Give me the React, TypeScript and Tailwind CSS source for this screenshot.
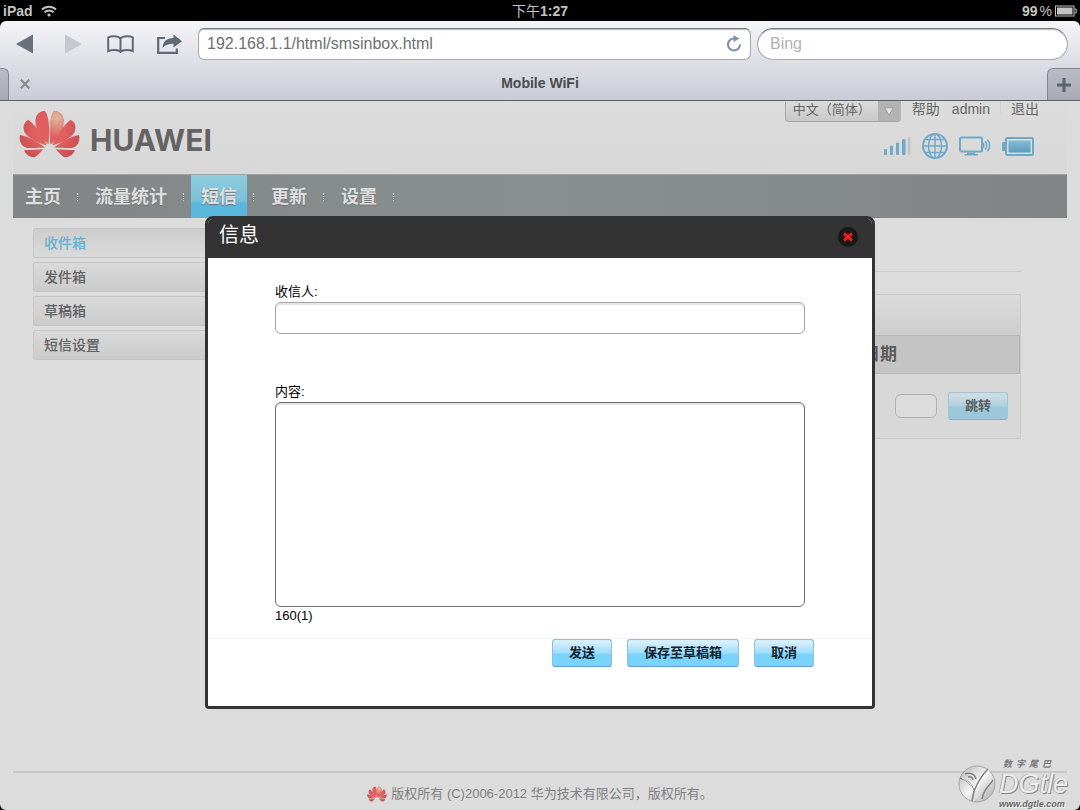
import { useState, FormEvent, ReactNode } from "react";

const navItems = ["主页", "流量统计", "短信", "更新", "设置"];
const folders = ["收件箱", "发件箱", "草稿箱", "短信设置"];

const fontSans = "font-['Liberation_Sans','Noto_Sans_CJK_SC',sans-serif]";

function HuaweiFlower({ className }: { className: string }) {
  const half = (
    <>
      <path d="M147 149C151 110 150 64 136 48C114 50 103 68 109 92C115 114 130 134 147 149Z" />
      <path d="M141 153C132 122 108 92 86 75C70 84 67 104 79 119C93 136 120 146 141 153Z" />
      <path d="M136 159C114 140 86 126 61 121C57 138 64 156 82 160C98 161 120 160 136 159Z" />
      <path d="M131 164L73 167C80 183 98 191 107 187C116 181 123 173 131 164Z" />
    </>
  );
  return (
    <svg viewBox="58 46 184 144" className={className} aria-hidden="true">
      <defs>
        <radialGradient id="petal" gradientUnits="userSpaceOnUse" cx="150" cy="110" r="95">
          <stop offset="0.5" stopColor="#e06060" />
          <stop offset="1" stopColor="#c95052" />
        </radialGradient>
        <radialGradient id="petalLight" gradientUnits="userSpaceOnUse" cx="172" cy="68" r="60">
          <stop offset="0" stopColor="#dfb89c" />
          <stop offset="1" stopColor="#e06060" />
        </radialGradient>
      </defs>
      <g fill="url(#petal)">{half}</g>
      <g fill="url(#petal)" transform="translate(300 0) scale(-1 1)">
        {half}
      </g>
      <path
        fill="url(#petalLight)"
        d="M153 149C149 110 150 64 164 48C186 50 197 68 191 92C185 114 170 134 153 149Z"
      />
    </svg>
  );
}

function StatusBar() {
  return (
    <div className="grid h-[21px] grid-cols-3 items-center bg-black px-[3px] text-sm font-bold text-[#c4c4c4]">
      <div className="flex items-center gap-2">
        <span>iPad</span>
        <svg viewBox="0 0 16 12" className="h-3 w-4" fill="none" stroke="currentColor" strokeWidth="2">
          <path d="M1 4.5a10 10 0 0 1 14 0M3.5 7.3a6.4 6.4 0 0 1 9 0" />
          <circle cx="8" cy="10" r="1.6" fill="currentColor" stroke="none" />
        </svg>
      </div>
      <div className="text-center">
        <span className="font-normal">下午</span>1:27
      </div>
      <div className="flex items-center justify-end gap-[3px]">
        <span>
          99<span className="pl-0.5 font-normal">%</span>
        </span>
        <svg viewBox="0 0 22 12" className="h-3 w-[22px]" fill="none" stroke="currentColor">
          <rect x="0.5" y="1" width="18.5" height="10" />
          <rect x="2" y="2.5" width="15.5" height="7" fill="currentColor" stroke="none" />
          <path d="M19.5 4h1.7v4h-1.7" />
        </svg>
      </div>
    </div>
  );
}

function BrowserBar() {
  return (
    <div className="rounded-t-md border-b border-[#5d5f63] bg-linear-to-b from-[#f5f5f8] via-[#dfe0e6] to-[#c9ccd7]">
      <div className="flex h-[47px] items-center pr-3 pb-0.5 pl-4">
        <div className="flex w-[182px] shrink-0 items-center">
          <button aria-label="后退" className="w-[49px]">
            <svg viewBox="0 0 17 20" className="h-5 w-[17px]">
              <path d="M0 10L17 0.5v19z" fill="#68707a" />
            </svg>
          </button>
          <button aria-label="前进" className="w-[42px]">
            <svg viewBox="0 0 17 20" className="h-5 w-[17px]">
              <path d="M17 10L0 0.5v19z" fill="#c6c8cd" />
            </svg>
          </button>
          <button aria-label="书签" className="w-[50px]">
            <svg viewBox="0 0 27 18" className="h-[18px] w-[27px]" fill="none" stroke="#5f6973" strokeWidth="2">
              <path d="M13.5 3.5C11 .8 5 .6 1.2 2.4v13.8C5 14.4 11 14.4 13.5 16.8C16 14.4 22 14.4 25.8 16.2V2.4C22 .6 16 .8 13.5 3.5V16.5" />
            </svg>
          </button>
          <button aria-label="分享">
            <svg viewBox="0 0 25 20" className="h-5 w-[25px]">
              <path d="M8 4H1.2v14.8h18.6v-4.3" fill="none" stroke="#5f6973" strokeWidth="2.2" />
              <path d="M5.5 14C6 7.5 9.5 4 16.5 4V0.5L25 7.2L16.5 13.5V9.8C12 9.6 8.5 10.5 5.5 14Z" fill="#5f6973" />
            </svg>
          </button>
        </div>
        <form className="grid flex-1 grid-cols-[16fr_9fr] gap-1.5" onSubmit={(e) => e.preventDefault()}>
          <div className="flex h-8 min-w-0 items-center rounded-md border border-[#a9abb0] border-t-[#77797d] bg-white px-2 shadow-[inset_0_1px_1px_#b5b6b9]">
            <input
              aria-label="地址"
              defaultValue="192.168.1.1/html/smsinbox.html"
              className="min-w-0 flex-1 text-base text-[#6f6f6f] outline-none"
            />
            <button type="button" aria-label="重新载入">
              <svg viewBox="0 0 16 17" className="h-[17px] w-4">
                <path d="M14 9.5A6 6 0 1 1 8 3.5" fill="none" stroke="#7f93ad" strokeWidth="2.2" />
                <path d="M7.5 0.3L13.5 3.6L7.5 7z" fill="#7f93ad" />
              </svg>
            </button>
          </div>
          <div className="flex h-8 min-w-0 items-center rounded-full border border-[#a9abb0] border-t-[#77797d] bg-white px-3 shadow-[inset_0_1px_1px_#b5b6b9]">
            <input
              aria-label="搜索"
              placeholder="Bing"
              className="min-w-0 flex-1 text-base outline-none placeholder:text-[#b3b3b3]"
            />
          </div>
        </form>
      </div>
      <div className="flex h-8 items-stretch">
        <div className="w-[9px] rounded-tr-md border-t border-r border-[#85878e] bg-linear-to-b from-[#b9bbc5] to-[#a7a9b5]" />
        <div className="flex w-6 items-center justify-end">
          <button aria-label="关闭标签页" className="px-[3px]">
            <svg viewBox="0 0 10 10" className="size-2.5" stroke="#85878c" strokeWidth="2">
              <path d="M0.8 0.8l8.4 8.4M9.2 0.8L0.8 9.2" />
            </svg>
          </button>
        </div>
        <div className="flex flex-1 items-center justify-center pb-0.5 text-sm font-bold text-[#484b50]">Mobile WiFi</div>
        <button
          aria-label="新标签页"
          className="flex w-[33px] items-center justify-center rounded-tl-md border-t border-l border-[#85878e] bg-linear-to-b from-[#b9bbc5] to-[#a7a9b5]"
        >
          <svg viewBox="0 0 14 14" className="size-3.5" stroke="#5b626c" strokeWidth="3">
            <path d="M7 0v14M0 7h14" />
          </svg>
        </button>
      </div>
    </div>
  );
}

function DeviceIcons() {
  return (
    <div className="mt-3 mr-[5px] flex items-center gap-[11px]">
      <svg viewBox="0 0 27 20" className="h-5 w-[27px]" fill="#6ea9c8">
        <rect x="0" y="13" width="3" height="6" rx="1" />
        <rect x="6" y="9.5" width="3" height="9.5" rx="1" />
        <rect x="12" y="6.5" width="3" height="12.5" rx="1" />
        <rect x="18" y="3" width="3.5" height="16" rx="1" />
        <rect x="24" y="1" width="2.5" height="18" rx="1" fill="#c3c3c3" />
      </svg>
      <svg viewBox="0 0 26 26" className="size-[26px]" fill="none" stroke="#6fabc9" strokeWidth="1.5">
        <circle cx="13" cy="13" r="12" strokeWidth="2" />
        <ellipse cx="13" cy="13" rx="6.5" ry="12" />
        <path d="M13 1v24M1 13h24M3.5 6.5h19M3.5 19.5h19" />
      </svg>
      <svg viewBox="0 0 32 20" className="h-5 w-8" fill="none" stroke="#6fabc9">
        <rect x="1" y="1.5" width="22" height="14" rx="1" strokeWidth="2" />
        <path d="M8 16.5h8v1.5h3v1.5H5.5V18H8z" fill="#6fabc9" stroke="none" />
        <path d="M24 7q1.5 2.5 0 5M26.2 5.2q3 4.3 0 8.6M28.5 3.5q4.2 6 0 12" strokeWidth="1.5" />
      </svg>
      <svg viewBox="0 0 32 19" className="h-[19px] w-8">
        <defs>
          <linearGradient id="cell" x1="0" y1="0" x2="0" y2="1">
            <stop offset="0" stopColor="#82bdd8" />
            <stop offset="1" stopColor="#5b9bbd" />
          </linearGradient>
        </defs>
        <rect x="4" y="1" width="27" height="17" rx="1.5" fill="none" stroke="#6ba9c8" strokeWidth="2" />
        <rect x="6.5" y="3.5" width="22" height="12" fill="url(#cell)" />
        <rect x="0" y="5" width="3.5" height="9" rx="1" fill="#6ba9c8" />
      </svg>
    </div>
  );
}

function BlueButton({ children, type = "button", onClick }: { children: ReactNode; type?: "button" | "submit"; onClick?: () => void }) {
  return (
    <button
      type={type}
      onClick={onClick}
      className="h-7 rounded-[3px] border border-[#8dbfe0] border-b-[#5c9fce] bg-linear-to-b from-[#d6effc] from-10% via-[#9bdcfb] via-50% to-[#7ad3fb] to-55% px-4 pb-0.5 text-[13px] leading-none font-bold text-[#14222b]"
    >
      {children}
    </button>
  );
}

function ComposeDialog({ onClose }: { onClose: () => void }) {
  const [to, setTo] = useState("");
  const [content, setContent] = useState("");

  function handleSend(e: FormEvent) {
    e.preventDefault();
    onClose();
  }

  return (
    <div className="absolute inset-x-0 top-[115px] flex justify-center">
      <form
        role="dialog"
        aria-labelledby="dialog-title"
        onSubmit={handleSend}
        className="w-[670px] max-w-full overflow-hidden rounded-t-lg rounded-b-sm border-3 border-[#333] bg-white text-[13px] text-black"
      >
        <div className="flex h-[39px] items-start justify-between bg-[#333] pr-[14px] pl-[11px]">
          <h2 id="dialog-title" className="text-xl leading-8 text-white">
            信息
          </h2>
          <button
            type="button"
            aria-label="关闭"
            onClick={onClose}
            className="mt-2 flex size-5 items-center justify-center rounded-full bg-[#181818]"
          >
            <svg viewBox="0 0 10 10" className="size-2.5" stroke="#f01c1c" strokeWidth="3">
              <path d="M1 1.5l8 7M9 1.5l-8 7" />
            </svg>
          </button>
        </div>
        <div className="px-[67px] pt-6">
          <label htmlFor="to" className="block leading-5">
            收信人:
          </label>
          <input
            id="to"
            value={to}
            onChange={(e) => setTo(e.target.value)}
            className="block h-8 w-full rounded-md border border-[#a5a5a5] px-2 shadow-[inset_0_2px_1px_#e6e6e6] outline-none"
          />
          <label htmlFor="content" className="mt-12 block leading-5">
            内容:
          </label>
          <textarea
            id="content"
            value={content}
            onChange={(e) => setContent(e.target.value)}
            className="block h-[205px] w-full resize-none rounded-md border border-[#6e6e6e] px-2 shadow-[inset_0_2px_1px_#e6e6e6] outline-none"
          />
          <p className="leading-[18px]">{160 - content.length}(1)</p>
        </div>
        <div className="mt-[13px] flex justify-end gap-[15px] border-t border-[#f5f5f5] pr-[58px] pb-[39px]">
          <BlueButton type="submit">发送</BlueButton>
          <BlueButton onClick={onClose}>保存至草稿箱</BlueButton>
          <BlueButton onClick={onClose}>取消</BlueButton>
        </div>
      </form>
    </div>
  );
}

function Watermark() {
  return (
    <div className="absolute right-3 bottom-0 flex items-center gap-[3px]">
      <svg viewBox="0 0 38 38" className="size-[38px]">
        <defs>
          <linearGradient id="silver" x1="0" y1="0" x2="1" y2="1">
            <stop offset="0" stopColor="#b4b4b4" />
            <stop offset="0.5" stopColor="#f4f4f4" />
            <stop offset="1" stopColor="#a2a2a2" />
          </linearGradient>
        </defs>
        <circle cx="19" cy="19" r="18" fill="url(#silver)" stroke="#a5a5a5" />
        <path
          d="M2 13C10 15 14 20 16 26C20 17 24 10 30 4M16 26L14 36M7 9C12 7 17 9 18 14M10 12C13 11 15 13 15 15M35 15C33 20 26 22 24 34"
          fill="none"
          stroke="#808080"
          strokeWidth="1.5"
        />
        <path d="M4 13C11 16 14 21 15 26M31 5C25 12 21 18 18 26" fill="none" stroke="#fff" />
      </svg>
      <div className="text-[#77777c] italic">
        <div className="flex gap-1 pl-1 text-[9px] leading-3 font-bold">
          <span>数</span>
          <span>字</span>
          <span>尾</span>
          <span>巴</span>
        </div>
        <div className="text-[27px] leading-7 text-[#ececec] [text-shadow:1px_1px_0_#888,-1px_0_0_#aaa]">DGtle</div>
        <div className="text-[9px] leading-3 font-bold text-[#68686c] [text-shadow:1px_1px_0_#f2f2f2]">www.dgtle.com</div>
      </div>
    </div>
  );
}

export default function App() {
  const [open, setOpen] = useState(true);

  return (
    <div className={`flex min-h-screen flex-col bg-black ${fontSans}`}>
      <StatusBar />
      <BrowserBar />
      <div className="relative flex flex-1 flex-col overflow-hidden rounded-b-md bg-[#dcdcdc] px-[13px] text-[#666]">
        <header className="flex h-[73px] justify-between bg-linear-to-b from-[#dcdcdc] to-[#d8d8d8]">
          <a href="#" aria-label="HUAWEI" className="flex items-start gap-[10px] pt-[9px] pl-[6px]">
            <HuaweiFlower className="h-12 w-[61px]" />
            <span className="pt-[10px] font-['Inter',sans-serif] text-3xl leading-10 font-bold text-[#636363]">HUAWEI</span>
          </a>
          <div className="flex flex-col items-end pr-7">
            <div className="flex h-5 items-start text-sm leading-[17px]">
              <div className="relative mr-[11px]">
                <select
                  aria-label="语言"
                  className="h-5 w-[116px] appearance-none rounded-b border border-t-0 border-[#a5a5a5] bg-linear-to-b from-[#dadada] to-[#c8c8c8] pb-1 pl-[7px] text-[13px] leading-4 text-[#666] outline-none"
                >
                  <option>中文（简体）</option>
                  <option>English</option>
                </select>
                <span className="pointer-events-none absolute top-0 right-0 flex h-5 w-[23px] items-center justify-center rounded-br bg-[#b3b3b3]">
                  <svg viewBox="0 0 10 9" className="h-[9px] w-2.5">
                    <path d="M0.8 0.8h8.4L5 8.2z" fill="#e6e6e6" stroke="#8e8e8e" strokeWidth="0.8" />
                  </svg>
                </span>
              </div>
              <a href="#help" className="mr-3">帮助</a>
              <a href="#admin">admin</a>
              <span className="mx-2.5 h-3 border-l border-[#d0d0d0]" />
              <a href="#logout">退出</a>
            </div>
            <DeviceIcons />
          </div>
        </header>

        <nav className="flex h-11 items-stretch border-t border-[#9fa3a3] bg-linear-to-r from-[#818585] via-[#8a9090] to-[#808484] pl-0.5 text-lg font-bold text-[#dedede]">
          {navItems.map((item) => (
            <div key={item} className="flex items-center">
              <a
                href="#"
                className={`flex h-full items-center px-[10px] [text-shadow:0_1px_1px_#6f7474] ${
                  item === "短信" ? "bg-linear-to-b from-[#8fccdd] via-[#78c0da] via-60% to-[#59b7dc] to-65%" : ""
                }`}
              >
                {item}
              </a>
              <span className="mx-1.5 h-2 w-0.5 border-l border-dotted border-[#c3c7c7]" />
            </div>
          ))}
        </nav>

        <div className="flex gap-8 pt-[10px] pr-[46px] pl-5">
          <ul className="w-[200px] shrink-0 space-y-1 text-sm font-medium">
            {folders.map((item, i) => (
              <li key={item}>
                <a
                  href="#"
                  className={`flex h-[30px] items-center rounded-xs border border-[#c6c6c6] pl-[10px] ${
                    i === 0
                      ? "bg-linear-to-b from-[#cdcdcd] to-[#dadada] text-[#63b2cf]"
                      : "bg-linear-to-b from-[#d9d9d9] to-[#cbcbcb] text-[#626262]"
                  }`}
                >
                  {item}
                </a>
              </li>
            ))}
          </ul>
          <main className="flex-1 pt-[43px]">
            <hr className="border-[#cacaca]" />
            <div className="mt-[22px] border border-[#cacaca] bg-[#d8d8d8]">
              <div className="h-10 bg-linear-to-b from-[#dbdbdb] to-[#cecece]" />
              <table className="w-full">
                <thead>
                  <tr className="h-[38px] border border-[#b5b5b5] bg-[#c4c4c4] text-[17px] text-[#5a5a5a]">
                    <th className="pr-[122px] text-right">日期</th>
                  </tr>
                </thead>
              </table>
              <div className="flex h-16 items-center justify-end gap-[11px] pr-3">
                <input aria-label="页码" className="h-6 w-[42px] rounded-md border border-[#b0b0b0] bg-[#dcdcdc]" />
                <button className="h-7 rounded-[3px] border border-[#a3c4d4] border-b-[#86b2c8] bg-linear-to-b from-[#ccdbe2] from-10% via-[#b0cfdc] via-50% to-[#9cc8db] to-55% px-4 pb-0.5 text-[13px] leading-none font-bold text-[#595f62]">
                  跳转
                </button>
              </div>
            </div>
          </main>
        </div>

        <footer className="mt-auto flex h-[39px] items-center justify-center gap-1 border-t-2 border-[#c8c8c8] pt-1 text-[13px] text-[#808080]">
          <HuaweiFlower className="h-4 w-5" />
          版权所有 (C)2006-2012 华为技术有限公司，版权所有。
        </footer>

        {open && <ComposeDialog onClose={() => setOpen(false)} />}
        <Watermark />
      </div>
    </div>
  );
}
